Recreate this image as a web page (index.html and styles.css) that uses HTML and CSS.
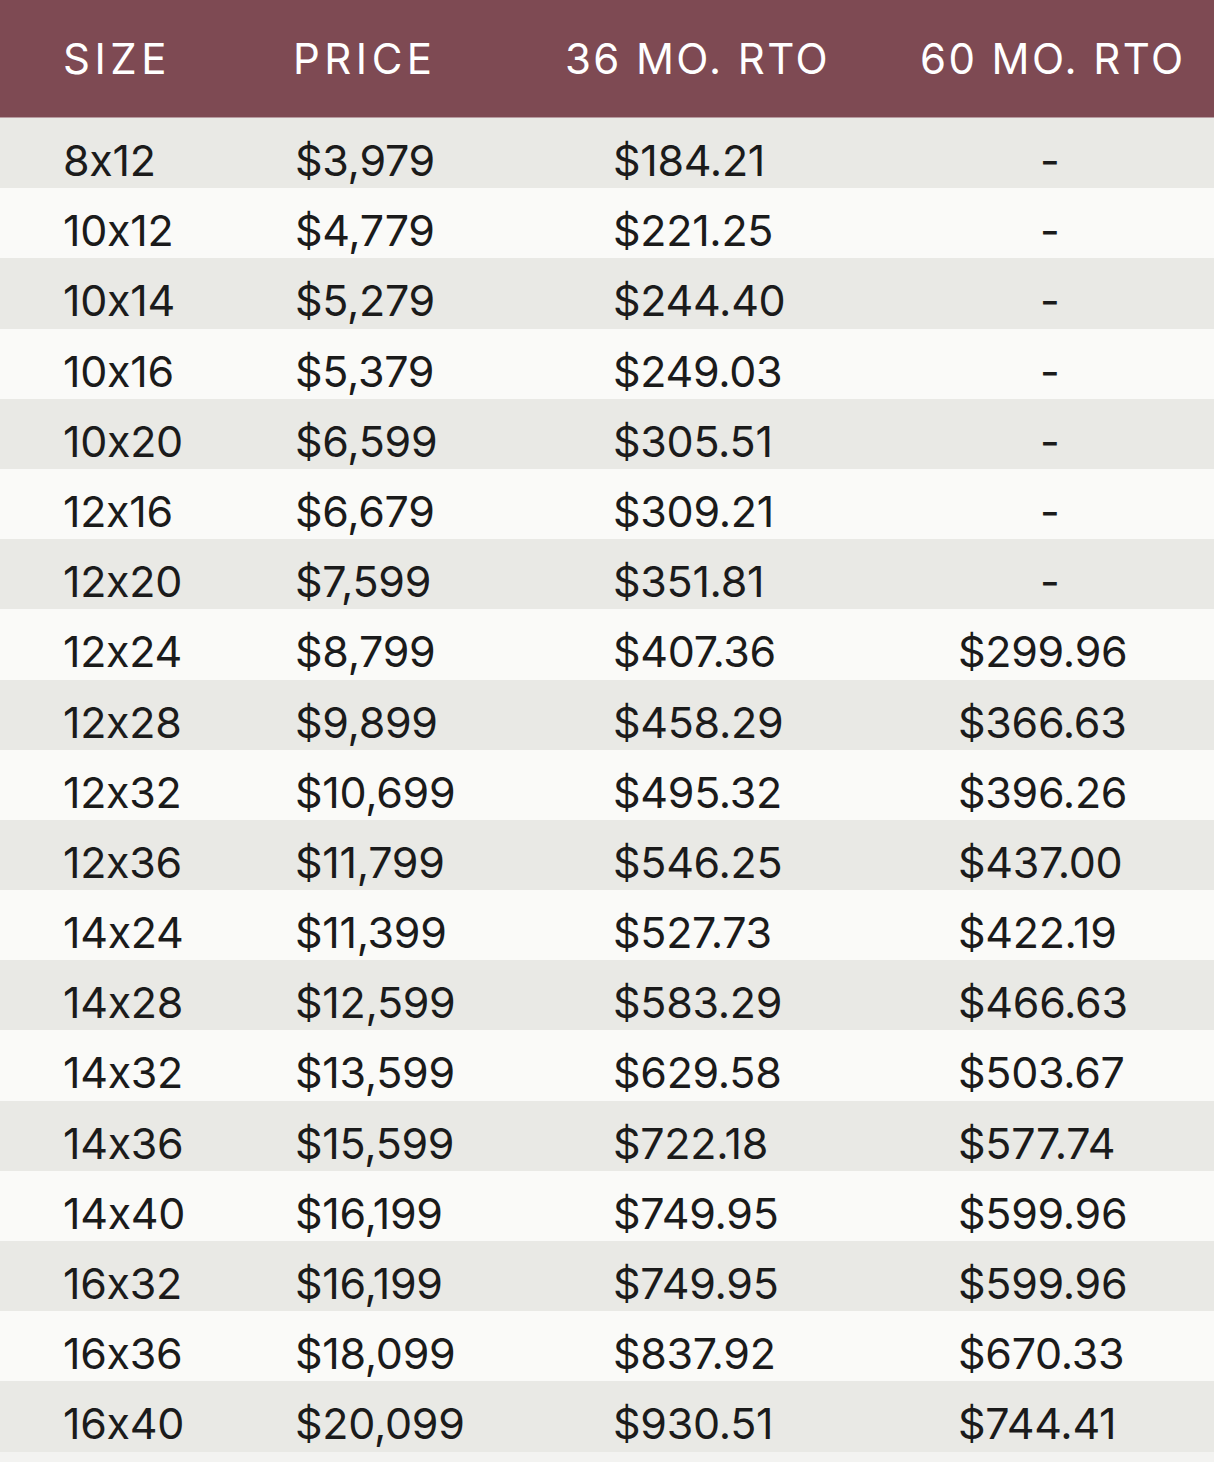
FILE: index.html
```html
<!DOCTYPE html>
<html>
<head>
<meta charset="utf-8">
<link rel="stylesheet" href="styles.css">
</head>
<body>
<div class="table">
  <div class="head">
    <div class="hc">SIZE</div>
    <div class="hc">PRICE</div>
    <div class="hc tight">36 MO. RTO</div>
    <div class="hc tight">60 MO. RTO</div>
  </div>
  <div class="row"><div>8x12</div><div>$3,979</div><div>$184.21</div><div class="dash">-</div></div>
  <div class="row"><div>10x12</div><div>$4,779</div><div>$221.25</div><div class="dash">-</div></div>
  <div class="row"><div>10x14</div><div>$5,279</div><div>$244.40</div><div class="dash">-</div></div>
  <div class="row"><div>10x16</div><div>$5,379</div><div>$249.03</div><div class="dash">-</div></div>
  <div class="row"><div>10x20</div><div>$6,599</div><div>$305.51</div><div class="dash">-</div></div>
  <div class="row"><div>12x16</div><div>$6,679</div><div>$309.21</div><div class="dash">-</div></div>
  <div class="row"><div>12x20</div><div>$7,599</div><div>$351.81</div><div class="dash">-</div></div>
  <div class="row"><div>12x24</div><div>$8,799</div><div>$407.36</div><div>$299.96</div></div>
  <div class="row"><div>12x28</div><div>$9,899</div><div>$458.29</div><div>$366.63</div></div>
  <div class="row"><div>12x32</div><div>$10,699</div><div>$495.32</div><div>$396.26</div></div>
  <div class="row"><div>12x36</div><div>$11,799</div><div>$546.25</div><div>$437.00</div></div>
  <div class="row"><div>14x24</div><div>$11,399</div><div>$527.73</div><div>$422.19</div></div>
  <div class="row"><div>14x28</div><div>$12,599</div><div>$583.29</div><div>$466.63</div></div>
  <div class="row"><div>14x32</div><div>$13,599</div><div>$629.58</div><div>$503.67</div></div>
  <div class="row"><div>14x36</div><div>$15,599</div><div>$722.18</div><div>$577.74</div></div>
  <div class="row"><div>14x40</div><div>$16,199</div><div>$749.95</div><div>$599.96</div></div>
  <div class="row"><div>16x32</div><div>$16,199</div><div>$749.95</div><div>$599.96</div></div>
  <div class="row"><div>16x36</div><div>$18,099</div><div>$837.92</div><div>$670.33</div></div>
  <div class="row"><div>16x40</div><div>$20,099</div><div>$930.51</div><div>$744.41</div></div>
</div>
</body>
</html>
```

FILE: styles.css
```css
html, body {
  margin: 0;
  padding: 0;
  background: #f3f3f1;
}
body {
  font-family: Inter, "Liberation Sans", sans-serif;
  width: 1214px;
  height: 1462px;
  overflow: hidden;
}
.table {
  width: 1214px;
}
.head {
  display: grid;
  grid-template-columns: 230px 272px 355px 1fr;
  padding: 31px 0 0 63px;
  height: 118px;
  box-sizing: border-box;
  background: #7e4a53;
  border-bottom: 1px solid #b89ca1;
  color: #ffffff;
  font-size: 42px;
  line-height: 56px;
  letter-spacing: 4.5px;
}
.hc.tight {
  letter-spacing: 2.4px;
}
.row {
  display: grid;
  grid-template-columns: 232px 318px 345px 1fr;
  padding: 14px 0 0 63px;
  height: 70.2px;
  box-sizing: border-box;
  font-size: 43px;
  line-height: 56px;
  letter-spacing: -0.3px;
  color: #1b1b1b;
  background: #fafaf8;
}
.row:nth-child(even) {
  background: #e9e9e5;
}
.row .dash {
  padding-left: 82px;
}
```
